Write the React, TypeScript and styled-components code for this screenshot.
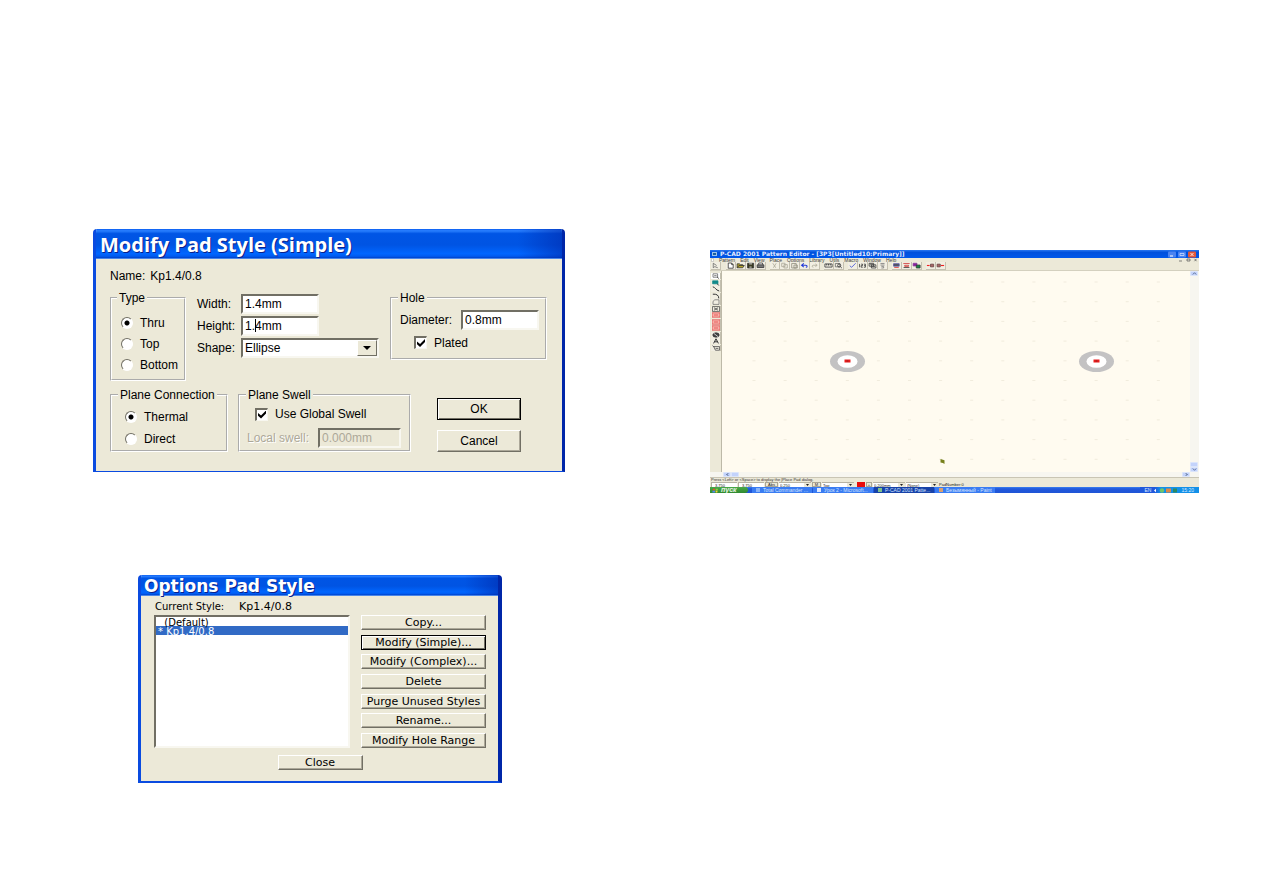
import React from 'react';
import styled, { createGlobalStyle, css } from 'styled-components';

const face = '#ece9d8';
const shade = '#aca899';
const dark = '#716f64';

const GlobalStyle = createGlobalStyle`
  * { box-sizing: border-box; }
  body {
    margin: 0;
    background: #fff;
    color: #000;
    font-family: "Liberation Sans", Arial, sans-serif;
    font-size: 12px;
  }
  button, input, select { font: inherit; color: inherit; margin: 0; border-radius: 0; }
`;

const Page = styled.main`
  display: grid;
  grid-template-columns: minmax(0, 472fr) minmax(0, 489fr);
  column-gap: 145px;
  align-items: start;
  padding: 229px 64px 110px 93px;
`;

const DialogColumn = styled.div`
  display: flex;
  flex-direction: column;
  gap: 103px;
`;

const EditorColumn = styled.div`
  padding-top: 21px;
`;

/* ---------- shared dialog parts ---------- */

const Dialog = styled.section<{ $compact?: boolean }>`
  border: solid #0a4be0;
  border-width: 0 3px 1px;
  border-right-color: #0026a8;
  border-radius: 4px 4px 0 0;
  overflow: hidden;
  background: ${face};
  ${(p) =>
    p.$compact &&
    css`
      margin: 0 63px 0 45px;
      border-width: 0 4px 2px 3px;
      font-family: "DejaVu Sans", Verdana, sans-serif;
      font-size: 11px;
    `}
`;

const TitleBar = styled.h2<{ $compact?: boolean }>`
  margin: 0 -3px;
  padding-left: ${(p) => (p.$compact ? 6 : 7)}px;
  height: ${(p) => (p.$compact ? 21 : 30)}px;
  line-height: ${(p) => (p.$compact ? 22 : 32)}px;
  font-family: ${(p) => (p.$compact ? '"DejaVu Sans", Verdana' : '"Open Sans", "Trebuchet MS"')}, sans-serif;
  font-size: ${(p) => (p.$compact ? 17 : 20)}px;
  font-weight: 700;
  white-space: nowrap;
  color: #fff;
  text-shadow: 1px 1px 0 #0a1f8a;
  border-bottom: 1px solid #4a86e8;
  background: linear-gradient(90deg, transparent 90%, rgba(0, 40, 170, 0.6)),
    linear-gradient(#0a5cf0 0, #2a80ff 6%, #0055e5 16%, #0054e3 55%, #0066ff 85%, #005bf0 94%, #0040c8 100%);
`;

const PushButton = styled.button<{ $default?: boolean; $compact?: boolean }>`
  height: ${(p) => (p.$compact ? 15 : 22)}px;
  padding: 0;
  line-height: 1;
  white-space: nowrap;
  background: ${face};
  border: 1px solid;
  border-color: ${(p) => (p.$default ? '#000' : `#fff ${dark} ${dark} #fff`)};
  box-shadow: ${(p) =>
    p.$default ? `inset 1px 1px 0 #fff, inset -1px -1px 0 ${dark}` : `inset -1px -1px 0 ${shade}`};
`;

const sunken = css`
  border: 2px solid;
  border-color: ${dark} #f8f7f0 #f8f7f0 ${dark};
  background: #fff;
`;

/* ---------- Modify Pad Style ---------- */

const Body = styled.form`
  padding: 9px 15px 19px 14px;
`;

const NameLine = styled.div`
  display: flex;
  gap: 5px;
  height: 16px;
  line-height: 16px;
  margin-bottom: 7px;
`;

const TopRow = styled.div`
  display: flex;
  align-items: flex-start;
  gap: 11px;
  margin-bottom: 7px;
`;

const BottomRow = styled.div`
  display: flex;
  align-items: flex-end;
  gap: 10px;
`;

const Group = styled.fieldset<{ $width: number; $pad: string }>`
  flex: none;
  width: ${(p) => p.$width}px;
  min-width: 0;
  margin: 0;
  padding: ${(p) => p.$pad};
  border: 2px groove #fff;
`;

const Legend = styled.legend<{ $outdent?: number }>`
  height: 14px;
  line-height: 14px;
  margin-left: -${(p) => p.$outdent ?? 2}px;
  padding: 0 2px;
  white-space: nowrap;
`;

const Choice = styled.label<{ $row: number; $indent?: number }>`
  display: flex;
  align-items: center;
  gap: 7px;
  height: ${(p) => p.$row}px;
  padding-left: ${(p) => p.$indent ?? 0}px;
  white-space: nowrap;
`;

const Radio = styled.input.attrs({ type: 'radio' })`
  appearance: none;
  flex: none;
  width: 12px;
  height: 12px;
  border: 1px solid;
  border-color: ${dark} #fff #fff ${dark};
  border-radius: 50%;
  background: #fff;
  &:checked {
    background: radial-gradient(circle, #000 2px, #fff 3px);
  }
`;

const Check = styled.input.attrs({ type: 'checkbox' })`
  appearance: none;
  flex: none;
  display: grid;
  place-items: center;
  width: 13px;
  height: 13px;
  ${sunken}
  border-width: 2px 1px 1px 2px;
  &:checked::before {
    content: '';
    width: 8px;
    height: 8px;
    background: #000;
    clip-path: polygon(0 30%, 38% 62%, 100% 0, 100% 36%, 38% 100%, 0 66%);
  }
`;

const Fields = styled.div`
  flex: 1;
  display: grid;
  grid-template-columns: 44px minmax(0, 1fr);
  grid-auto-rows: 20px;
  row-gap: 2px;
  align-items: center;
  padding-top: 3px;
  white-space: nowrap;
`;

const TextBox = styled.input.attrs({ type: 'text' })`
  width: 78px;
  height: 20px;
  padding: 0 2px;
  ${sunken}
  &:disabled {
    flex: 1;
    min-width: 0;
    color: ${shade};
    background: ${face};
  }
`;

const CaretField = styled.span`
  position: relative;
  height: 20px;
  &::after {
    content: '';
    position: absolute;
    left: 14px;
    top: 3px;
    width: 1px;
    height: 13px;
    background: #000;
  }
`;

const ComboFrame = styled.span`
  display: flex;
  height: 20px;
  ${sunken}
`;

const Combo = styled.select`
  appearance: none;
  flex: 1;
  min-width: 0;
  padding: 0 2px;
  border: 0;
  background: transparent;
`;

const ComboArrow = styled.span`
  display: grid;
  place-items: center;
  width: 20px;
  border: 1px solid;
  border-color: #fff ${dark} ${dark} #fff;
  background: ${face};
  &::before {
    content: '';
    border: solid transparent;
    border-width: 4px 4px 0;
    border-top-color: #000;
  }
`;

const LabeledRow = styled.div<{ $label: number; $dim?: boolean }>`
  display: flex;
  align-items: center;
  white-space: nowrap;
  & > label {
    flex: none;
    width: ${(p) => p.$label}px;
    ${(p) => p.$dim && css`color: ${shade}; text-shadow: 1px 1px 0 #fff;`}
  }
`;

const Stack = styled.div<{ $gap: number }>`
  display: flex;
  flex-direction: column;
  gap: ${(p) => p.$gap}px;
`;

const Actions = styled.div`
  display: flex;
  flex-direction: column;
  gap: 10px;
  width: 84px;
  margin-left: 16px;
`;

function ModifyPadStyle() {
  return (
    <Dialog>
      <TitleBar>Modify Pad Style (Simple)</TitleBar>
      <Body onSubmit={(e) => e.preventDefault()}>
        <NameLine>
          <span>Name:</span>
          <span>Kp1.4/0.8</span>
        </NameLine>
        <TopRow>
          <Group $width={76} $pad="7px 0 4px 9px">
            <Legend $outdent={4}>Type</Legend>
            {['Thru', 'Top', 'Bottom'].map((t) => (
              <Choice key={t} $row={21}>
                <Radio name="type" defaultChecked={t === 'Thru'} />
                {t}
              </Choice>
            ))}
          </Group>
          <Fields>
            <label htmlFor="width">Width:</label>
            <TextBox id="width" defaultValue="1.4mm" />
            <label htmlFor="height">Height:</label>
            <CaretField>
              <TextBox id="height" defaultValue="1.4mm" />
            </CaretField>
            <label htmlFor="shape">Shape:</label>
            <ComboFrame>
              <Combo id="shape">
                <option>Ellipse</option>
              </Combo>
              <ComboArrow aria-hidden />
            </ComboFrame>
          </Fields>
          <Group $width={157} $pad="5px 7px 5px 8px">
            <Legend>Hole</Legend>
            <Stack $gap={2}>
              <LabeledRow $label={61}>
                <label htmlFor="diameter">Diameter:</label>
                <TextBox id="diameter" defaultValue="0.8mm" />
              </LabeledRow>
              <Choice $row={21} $indent={14}>
                <Check defaultChecked />
                Plated
              </Choice>
            </Stack>
          </Group>
        </TopRow>
        <BottomRow>
          <Group $width={118} $pad="4px 0 0 13px">
            <Legend $outdent={7}>Plane Connection</Legend>
            {['Thermal', 'Direct'].map((t) => (
              <Choice key={t} $row={22}>
                <Radio name="connection" defaultChecked={t === 'Thermal'} />
                {t}
              </Choice>
            ))}
          </Group>
          <Group $width={173} $pad="2px 8px 2px 7px">
            <Legend $outdent={1}>Plane Swell</Legend>
            <Stack $gap={4}>
              <Choice $row={20} $indent={8}>
                <Check defaultChecked />
                Use Global Swell
              </Choice>
              <LabeledRow $label={71} $dim>
                <label htmlFor="swell">Local swell:</label>
                <TextBox id="swell" defaultValue="0.000mm" disabled />
              </LabeledRow>
            </Stack>
          </Group>
          <Actions>
            <PushButton type="submit" $default>OK</PushButton>
            <PushButton type="button">Cancel</PushButton>
          </Actions>
        </BottomRow>
      </Body>
    </Dialog>
  );
}

/* ---------- Options Pad Style ---------- */

const StyleBody = styled.div`
  display: flex;
  flex-direction: column;
  padding: 3px 12px 11px 13px;
`;

const CurrentLine = styled.div`
  display: flex;
  height: 16px;
  line-height: 16px;
  padding-left: 1px;
  white-space: nowrap;
  & > label {
    width: 84px;
    font-size: 10px;
  }
`;

const StyleRow = styled.div`
  display: flex;
  gap: 11px;
  height: 133px;
  margin-bottom: 7px;
`;

const StyleList = styled.select`
  flex: 1;
  min-width: 0;
  padding: 0;
  overflow: hidden;
  outline: 0;
  font-size: 10px;
  ${sunken}
  & option {
    min-height: 9px;
    height: 9px;
    line-height: 8px;
    padding: 0 2px;
    white-space: pre;
  }
  & option:checked {
    color: #fff;
    background: #316ac5 linear-gradient(#316ac5, #316ac5);
  }
`;

const StyleActions = styled.div`
  display: flex;
  flex-direction: column;
  justify-content: space-between;
  width: 125px;
`;

const CloseRow = styled.div`
  display: flex;
  justify-content: center;
  & > button { width: 85px; }
`;

function OptionsPadStyle() {
  const actions = ['Copy...', 'Modify (Simple)...', 'Modify (Complex)...', 'Delete', 'Purge Unused Styles', 'Rename...', 'Modify Hole Range'];
  return (
    <Dialog $compact>
      <TitleBar $compact>Options Pad Style</TitleBar>
      <StyleBody>
        <CurrentLine>
          <label htmlFor="styles">Current Style:</label>
          <span>Kp1.4/0.8</span>
        </CurrentLine>
        <StyleRow>
          <StyleList id="styles" size={14} defaultValue="kp">
            <option value="default">{'\u00a0\u00a0(Default)'}</option>
            <option value="kp">* Kp1.4/0.8</option>
          </StyleList>
          <StyleActions>
            {actions.map((a, i) => (
              <PushButton key={a} $compact $default={i === 1}>{a}</PushButton>
            ))}
          </StyleActions>
        </StyleRow>
        <CloseRow>
          <PushButton $compact>Close</PushButton>
        </CloseRow>
      </StyleBody>
    </Dialog>
  );
}

/* ---------- Pattern editor ---------- */

const Editor = styled.section`
  display: flex;
  flex-direction: column;
  background: ${face};
  font-size: 5px;
  white-space: nowrap;
  overflow: hidden;
`;

const EditorTitle = styled.header`
  display: flex;
  align-items: center;
  height: 8px;
  padding: 0 2px 0 2px;
  background: linear-gradient(#2a78f0, #0050dc 30%, #0058ea);
  & > svg { flex: none; }
`;

const EditorName = styled.h2`
  flex: 1;
  margin: 0 0 0 3px;
  font: 700 6px/8px "DejaVu Sans", Verdana, sans-serif;
  color: #e6eeff;
`;

const MenuBar = styled.nav`
  display: flex;
  align-items: center;
  gap: 5px;
  height: 4px;
  padding: 0 1px;
  line-height: 4px;
  color: #444;
  & a { color: inherit; text-decoration: none; }
  & > svg:last-child { margin-left: auto; }
`;

const ToolBar = styled.div`
  display: flex;
  gap: 4px;
  height: 9px;
  padding: 0 1px;
  border-bottom: 1px solid #d4d0bf;
`;

const ToolGroup = styled.div`
  display: flex;
  &:first-child { margin-right: 1px; }
`;

const Tool = styled.button<{ $active?: boolean }>`
  display: grid;
  place-items: center;
  width: 10px;
  min-height: 0;
  padding: 0;
  border: solid;
  border-width: 0 1px 1px 0;
  border-color: #c4c0b0;
  background: ${(p) => (p.$active ? '#fff' : '#f1eee2')};
  & > svg { display: block; }
`;

const Workspace = styled.div`
  display: flex;
  height: 201px;
`;

const SideTools = styled.div`
  display: flex;
  flex-direction: column;
  justify-content: space-between;
  width: 12px;
  padding: 2px 1px 121px;
  border-right: 1px solid #bdb9a8;
  & > button {
    flex: none;
    height: 6px;
    width: 10px;
    border-bottom: 0;
  }
`;

const Canvas = styled.svg`
  flex: 1;
  min-width: 0;
  height: 201px;
  background: #fffbf0;
`;

const ScrollV = styled.div`
  display: flex;
  flex-direction: column;
  width: 9px;
  background: #f7f6f0;
  & > button:nth-child(2) { margin-top: auto; }
`;

const ScrollH = styled.div`
  display: flex;
  height: 6px;
  padding: 0 9px 0 13px;
  background: #f7f6f0;
  border-bottom: 1px solid #c9c5b4;
  & > button:last-child { margin-left: auto; }
`;

const ScrollButton = styled.button`
  display: grid;
  place-items: center;
  width: 8px;
  height: 5px;
  padding: 0;
  border: 1px solid #dbe5fb;
  border-radius: 1px;
  background: #c3d3fb;
`;

const Hint = styled.p`
  margin: 0;
  height: 4px;
  padding-left: 1px;
  font-size: 4px;
  line-height: 4px;
  color: #333;
`;

const StatusRow = styled.div`
  display: flex;
  align-items: center;
  gap: 1px;
  height: 5px;
  padding-left: 1px;
  font-size: 4px;
  line-height: 5px;
  color: #222;
`;

const StatusInput = styled.input.attrs({ type: 'text' })`
  width: 26px;
  height: 5px;
  padding: 0 3px;
  border: 1px solid #b8b4a4;
  border-width: 1px 0 0 1px;
  background: #fff;
`;

const StatusButton = styled.button<{ $width: number }>`
  width: ${(p) => p.$width}px;
  height: 5px;
  padding: 0;
  line-height: 3px;
  border: 1px solid #aaa694;
  background: ${face};
`;

const StatusPick = styled.span`
  display: flex;
  align-items: center;
  width: 32px;
  height: 5px;
  border-top: 1px solid #b8b4a4;
  background: #fff;
  & > select {
    appearance: none;
    flex: 1;
    min-width: 0;
    height: 4px;
    padding: 0 1px;
    border: 0;
    background: transparent;
  }
  & > svg { flex: none; background: ${face}; }
`;

const Swatch = styled.span`
  width: 8px;
  height: 5px;
  margin-left: 2px;
  background: #e80c0c;
`;

const TaskBar = styled.footer`
  display: flex;
  height: 6px;
  color: #dce8ff;
  background: linear-gradient(#3a80f0, #2058dc 30%, #1f55d6);
`;

const Start = styled.button`
  width: 38px;
  padding: 0 0 0 2px;
  border: 0;
  border-radius: 0 3px 3px 0;
  display: flex;
  align-items: center;
  gap: 2px;
  font: italic 700 7px/6px "Liberation Sans", Arial, sans-serif;
  color: #e8f5e4;
  background: linear-gradient(#4aa848, #2f8a30);
`;

const Task = styled.button<{ $active?: boolean }>`
  display: flex;
  align-items: center;
  gap: 3px;
  width: 60px;
  margin-left: 1px;
  padding: 0 4px;
  border: 0;
  font-size: 5px;
  line-height: 6px;
  color: #d5e4ff;
  background: ${(p) => (p.$active ? '#1742a8' : '#3a7cf2')};
  & > svg { flex: none; }
`;

const Tasks = styled.div`
  display: flex;
  flex: 1;
  padding-left: 3px;
`;

const Tray = styled.div`
  display: flex;
  align-items: center;
  justify-content: flex-end;
  gap: 2px;
  padding: 0 5px;
  background: linear-gradient(90deg, #2058dc 25%, #1290e8 35%);
`;

type IconProps = { children: React.ReactNode; w?: number; h?: number };
const Icon = ({ children, w = 9, h = 7 }: IconProps) => (
  <svg width={w} height={h} viewBox="0 0 8 6" aria-hidden fill="none" stroke="#333" strokeWidth="0.7">
    {children}
  </svg>
);

const g = '#aaa695';
const toolGroups: [string, React.ReactNode][][] = [
  [['Select', <path d="M2 1v4l1.4-1 2.6 1M2 1l3 2" stroke="#666" />]],
  [
    ['New', <path d="M2 .8h3l1.4 1.4V5.4H2zM5 .8v1.4h1.4" fill="#fff" />],
    ['Open', <path d="M1 5V1.5h2l1 .8h2V3M1 5l1.6-2H7.4L6 5z" fill="#b5a52c" />],
    ['Save', <><path d="M1.4 1h5.4v4.2H1.4z" fill="#3b3b22" /><path d="M2.8 1.6h2.6M3 4.4h2" stroke="#fff" /></>],
    ['Print', <><path d="M2.4 2.2V.8h3.4v1.4" fill="#fff" /><path d="M1 2.4h6v2.4H1z" fill="#777" /></>],
  ],
  [
    ['Cut', <path d="M2.5 1l2.6 4M5.5 1L3 5" stroke={g} />],
    ['Copy', <path d="M1.5 1h3v3h-3zM3.5 2.2h3v3h-3z" stroke={g} />],
    ['Paste', <path d="M1.5 1.2h4v4h-4zM3.5 2.6h3v2.6h-3z" stroke="#8f8b7c" />],
    ['Undo', <path d="M2 2.8h3.2c1.5 0 1.5 1.8 0 1.8M3.4 1.2L1.4 2.8l2 1.6" stroke="#2038d8" strokeWidth="0.9" />],
    ['Redo', <path d="M6 2.8H3c-1.4 0-1.4 1.8 0 1.8M4.8 1.6L6.4 2.8 4.8 4" stroke={g} />],
  ],
  [
    ['Measure', <path d="M.8 1.6h6.4v2.8H.8zM2.4 1.6v1.4M4 1.6v1.4M5.6 1.6v1.4" />],
    ['Zoom', <><path d="M1.2 1.2h4v3h-4z" stroke="#666" /><circle cx="4.6" cy="3" r="1.4" /><path d="M5.6 4l1.4 1.3" /></>],
  ],
  [
    ['Check', <path d="M1.6 3.2l1.6 1.4L6.8 1" stroke="#3548d8" />],
    ['Renumber', <path d="M1.4 1.6v3M2.8 1.8h1.2v1.3H2.8v1.4h1.4M5.2 1.8h1.4v2.7H5.2M5.4 3.1h1" />],
    ['Nets', <path d="M1 1h4v2.6H1zM3 2.4h4v2.8H3zM1.6 1.8h2.6M3.8 3.8h2.4" />],
    ['Filter', <path d="M2.2 1.2h3.6M2.2 2.6h3.6M3 3.8h2v1.4H3" stroke="#777" />],
  ],
  [
    ['Record', <><path d="M1.4 1.4h5v2.2h-5z" fill="#555" stroke="#55a" /><path d="M2 4.8h4" stroke="#d33" /></>],
    ['Align', <><path d="M1.2 1.2h5.6M2.4 2.8h3.4v1h-3.4z" stroke="#c33" /><path d="M1.4 4.8h5.2" /></>],
    ['Layers', <><path d="M1 1h3.4v2.4H1z" fill="#8a1fa0" stroke="#8a3f9a" /><path d="M3.8 2.6h3.4v2.6H3.8z" fill="#178a46" stroke="#333" /></>],
  ],
  [
    ['Previous', <><path d="M.8 3h2.4" stroke="#e22" strokeWidth="1" /><path d="M4 1.8h2.8v2.4H4z" fill="#a66" stroke="#644" /></>],
    ['Next', <><path d="M1 1.8h2.8v2.4H1z" fill="#a66" stroke="#644" /><path d="M4.4 3h2.8" stroke="#e22" strokeWidth="1" /></>],
  ],
];

const redPad = <path d="M0 .8h8v4.4H0zM2 3h4" stroke="#e04040" fill="#f7b0a8" />;
const sideTools: [string, React.ReactNode][] = [
  ['Part', <><path d="M1 .8h4.600v3.400H1zM2.200 2.600h2.400" stroke="#555" /><path d="M5 4l2 1.600" /></>],
  ['Component', <><path d="M.6 .8h5.400v3H.6z" fill="#118a8a" stroke="#118a8a" /><path d="M5 4l2.200 1.400" /></>],
  ['Line', <path d="M.8 .8c2.400.2 2.800 3.400 6.400 4.200" strokeWidth="1" />],
  ['Arc', <path d="M.8 1.200c3.800-.4 6 1 6 4.200" strokeWidth="1" />],
  ['Polygon', <path d="M1 5.400V2.400L2.800.8H7v4.600z" stroke="#666" />],
  ['Point', <path d="M.4 .6h7.200v4.800H.4zM2 1.800l4 2.400M6 1.800L2 4.200" />],
  ['Copper pour', redPad],
  ['Cutout', redPad],
  ['Keepout', redPad],
  ['Hidden', <><ellipse cx="4" cy="3" rx="3.2" ry="2.200" fill="#444" /><path d="M1.400 1l5 4" stroke="#fff" /></>],
  ['Text', <path d="M1.600 5.400L4 .8l2.400 4.600M2.600 3.800h2.800" strokeWidth="1" />],
  ['Attribute', <path d="M.4 .6l1.600 1.400M1.800 1.600h5.800v3.600H3.400zM3.600 3.400h2.800" />],
];

const menus = ['Pattern', 'Edit', 'View', 'Place', 'Options', 'Library', 'Utils', 'Macro', 'Window', 'Help'];

const DropMark = () => (
  <svg width="7" height="4" viewBox="0 0 7 4" aria-hidden>
    <path d="M2 1h3L3.5 3z" fill="#222" />
  </svg>
);

const Pick = ({ label, value }: { label: string; value: string }) => (
  <StatusPick>
    <select aria-label={label}>
      <option>{value}</option>
    </select>
    <DropMark />
  </StatusPick>
);

const Arrow = ({ d }: { d: string }) => (
  <svg width="5" height="3" viewBox="0 0 5 3" aria-hidden>
    <path d={d} fill="none" stroke="#4d6185" strokeWidth="0.8" />
  </svg>
);

const Pad = ({ x }: { x: number }) => (
  <g>
    <ellipse cx={x} cy="90.5" rx="17.5" ry="10.5" fill="#c3c2c3" />
    <ellipse cx={x} cy="90.5" rx="10" ry="6.3" fill="#fff" />
    <rect x={x - 3} y="88.5" width="6" height="3" fill="#ec1c1c" />
    <rect x={x - 1} y="89.5" width="2" height="1" fill="#8c2020" />
  </g>
);

function PatternEditor() {
  const cols = Array.from({ length: 14 }, (_, i) => 32 + i * 31.1);
  const rows = Array.from({ length: 10 }, (_, i) => 11 + i * 19.7);
  return (
    <Editor>
      <EditorTitle>
        <svg width="5" height="6" viewBox="0 0 5 6" aria-hidden>
          <rect y="1" width="5" height="4" fill="#9cc3e8" />
          <rect x="1" y="2" width="3" height="2" fill="#1e5f9e" />
        </svg>
        <EditorName>P-CAD 2001 Pattern Editor - [3P3[Untitled10:Primary]]</EditorName>
        <svg width="29" height="7" viewBox="0 0 29 7" aria-hidden>
          <rect x="0" y="0.5" width="8" height="6" rx="1" fill="#4b83f0" />
          <path d="M2 5h3" stroke="#fff" />
          <rect x="10" y="0.5" width="8" height="6" rx="1" fill="#4b83f0" />
          <path d="M12 4.500v-2h4v2z" stroke="#dbe6ff" strokeWidth="0.7" fill="none" />
          <rect x="20" y="0.5" width="8" height="6" rx="1" fill="#e2583a" />
          <path d="M22.500 2l3 3M25.500 2l-3 3" stroke="#fff" strokeWidth="0.8" />
        </svg>
      </EditorTitle>
      <MenuBar>
        <svg width="3" height="4" viewBox="0 0 3 4" aria-hidden>
          <path d="M.5 .5h2v3h-2z" fill="#fff" stroke="#aaa" strokeWidth="0.5" />
        </svg>
        {menus.map((m) => (
          <a key={m} href="#menu">{m}</a>
        ))}
        <svg width="20" height="4" viewBox="0 0 20 4" aria-hidden>
          <path d="M1 3h3M9 1h3v2H9zM16.500 .8l2 2.400M18.500 .8l-2 2.400" fill="none" stroke="#555" strokeWidth="0.7" />
        </svg>
      </MenuBar>
      <ToolBar>
        {toolGroups.map((group, i) => (
          <ToolGroup key={i}>
            {group.map(([name, icon]) => (
              <Tool key={name} aria-label={name}><Icon>{icon}</Icon></Tool>
            ))}
          </ToolGroup>
        ))}
      </ToolBar>
      <Workspace>
        <SideTools>
          {sideTools.map(([name, icon], i) => (
            <Tool key={name} aria-label={name} $active={i === 0}><Icon w={8} h={6}>{icon}</Icon></Tool>
          ))}
        </SideTools>
        <Canvas viewBox="0 0 468 201" role="img" aria-label="Pad layout">
          {rows.map((y) =>
            cols.map((x) => <rect key={`${x}-${y}`} x={x - 1.5} y={y - 0.5} width="3" height="1" fill="#f1ecdd" />)
          )}
          <Pad x={125.5} />
          <Pad x={374.5} />
          <path d="M218.500 188l4 1.200v3.800l-1.600-1-2.400-.6z" fill="#77801c" />
        </Canvas>
        <ScrollV>
          <ScrollButton aria-label="Scroll up"><Arrow d="M.8 2.500L2.500 .7l1.700 1.800" /></ScrollButton>
          <ScrollButton aria-label="Vertical position" />
          <ScrollButton aria-label="Scroll down"><Arrow d="M.8 .5l1.700 1.800L4.200 .5" /></ScrollButton>
        </ScrollV>
      </Workspace>
      <ScrollH>
        <ScrollButton aria-label="Scroll left"><Arrow d="M3.500 .3L1.500 1.500l2 1.200" /></ScrollButton>
        <ScrollButton aria-label="Horizontal position" />
        <ScrollButton aria-label="Scroll right"><Arrow d="M1.500 .3l2 1.200-2 1.200" /></ScrollButton>
      </ScrollH>
      <Hint>Press &lt;Left&gt; or &lt;Space&gt; to display the |Place Pad dialog.</Hint>
      <StatusRow>
        <StatusInput aria-label="X" defaultValue="3.750" />
        <StatusInput aria-label="Y" defaultValue="3.750" />
        <StatusButton $width={13}>Abs</StatusButton>
        <Pick label="Grid" value="0.250" />
        <StatusButton $width={9}>M</StatusButton>
        <Pick label="Layer" value="Top" />
        <Swatch />
        <StatusButton $width={6}>+</StatusButton>
        <Pick label="Line width" value="0.200mm" />
        <Pick label="Radius" value="(None)" />
        <span>PadNumber:0</span>
      </StatusRow>
      <TaskBar>
        <Start>
          <svg width="7" height="5" viewBox="0 0 7 5" aria-hidden>
            <path d="M1 .8h2v1.600H.6z" fill="#e8502c" />
            <path d="M3.600 .8h2.400l-.4 1.600h-2z" fill="#8fd13c" />
            <path d="M.6 2.800H3v1.600H.3z" fill="#4a8df0" />
            <path d="M3.600 2.800h2l-.3 1.600H3.600z" fill="#f5cf3a" />
          </svg>
          пуск
        </Start>
        <Tasks>
          {['Total Commander ...', 'Урок 2 - Microsoft...', 'P-CAD 2001 Patte...', 'Безымянный - Paint'].map((t, i) => (
            <Task key={t} $active={i === 2}>
              <svg width="4" height="4" viewBox="0 0 4 4" aria-hidden>
                <rect width="4" height="4" fill={['#8ab4f8', '#dfe9ff', '#7fc08a', '#d8a070'][i]} />
              </svg>
              {t}
            </Task>
          ))}
        </Tasks>
        <Tray>
          <span>EN</span>
          <svg width="26" height="5" viewBox="0 0 26 5" aria-hidden>
            <path d="M3 .8L1 2.500l2 1.700z" fill="#fff" />
            <circle cx="9" cy="2.500" r="2.200" fill="#6fc46a" />
            <rect x="13" y="0.5" width="5" height="4" fill="#e08848" />
            <rect x="20" y="0.5" width="4" height="4" fill="#2c8a60" />
          </svg>
          <span>15:20</span>
        </Tray>
      </TaskBar>
    </Editor>
  );
}

export default function App() {
  return (
    <>
      <GlobalStyle />
      <Page>
        <DialogColumn>
          <ModifyPadStyle />
          <OptionsPadStyle />
        </DialogColumn>
        <EditorColumn>
          <PatternEditor />
        </EditorColumn>
      </Page>
    </>
  );
}
